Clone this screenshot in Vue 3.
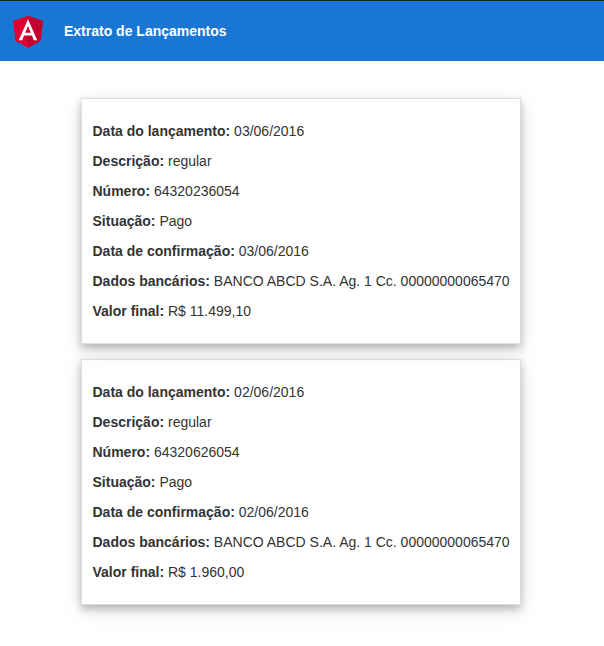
<script setup>
const entries = [
  { date: '03/06/2016', number: '64320236054', value: 'R$ 11.499,10' },
  { date: '02/06/2016', number: '64320626054', value: 'R$ 1.960,00' }
].map((e) => [
  ['Data do lançamento:', e.date],
  ['Descrição:', 'regular'],
  ['Número:', e.number],
  ['Situação:', 'Pago'],
  ['Data de confirmação:', e.date],
  ['Dados bancários:', 'BANCO ABCD S.A. Ag. 1 Cc. 00000000065470'],
  ['Valor final:', e.value]
])
</script>

<template>
  <div class="page">
    <header class="toolbar">
      <svg class="logo" viewBox="0 0 250 250" aria-hidden="true">
        <path fill="#dd0031" d="M125 30 31.9 63.2l14.2 123.1L125 230l78.9-43.7 14.2-123.1z" />
        <path fill="#c3002f" d="M125 30v200l78.9-43.7 14.2-123.1z" />
        <path fill="#fff" d="M125 52.1 66.8 182.6h21.7l11.7-29.2h49.4l11.7 29.2H183L125 52.1zm17 83.3h-34l17-40.9z" />
      </svg>
      <span class="title">Extrato de Lançamentos</span>
    </header>
    <main class="list">
      <section v-for="(entry, i) in entries" :key="i" class="card">
        <p v-for="[label, value] in entry" :key="label"><strong>{{ label }}</strong> {{ value }}</p>
      </section>
    </main>
  </div>
</template>

<style>
body {
  background: #fff;
}
</style>

<style scoped>
.page {
  height: 646px;
  box-sizing: border-box;
  border-top: 1px solid #222;
  font-family: "Liberation Sans", Arial, sans-serif;
  font-size: 14px;
  color: #333;
}
.toolbar {
  display: flex;
  align-items: center;
  height: 60px;
  background: #1976d2;
  color: #fff;
  font-weight: 700;
}
.logo {
  width: 40px;
  height: 40px;
  margin: 0 16px 0 8px;
}
.list {
  display: flex;
  flex-direction: column;
  align-items: center;
  gap: 15px;
  padding: 37px 2px 0 0;
}
.card {
  box-sizing: border-box;
  width: 440px;
  height: 246px;
  padding: 22px 0 0 10.5px;
  border: 1px solid #ddd;
  box-shadow: 0 4px 8px 0 rgba(0, 0, 0, 0.24), 0 6px 20px 0 rgba(0, 0, 0, 0.1);
}
.card p {
  margin: 0 0 10px;
  line-height: 20px;
  white-space: nowrap;
}
</style>
